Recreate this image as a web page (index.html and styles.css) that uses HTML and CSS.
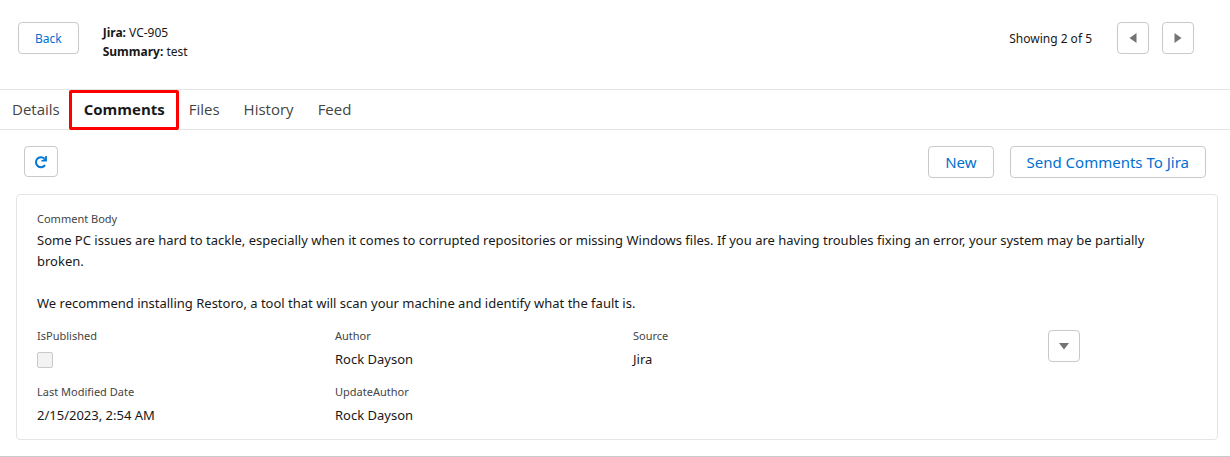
FILE: index.html
```html
<!DOCTYPE html>
<html lang="en">
<head>
    <meta charset="UTF-8">
    <meta name="viewport" content="width=device-width, initial-scale=1.0">
    <title>Jira VC-905</title>
    <link rel="stylesheet" href="styles.css">
</head>
<body>
    <div class="page">
        <header class="header">
            <button class="btn btn-small" type="button">Back</button>
            <div class="issue">
                <p><strong>Jira:</strong> VC-905</p>
                <p><strong>Summary:</strong> test</p>
            </div>
            <div class="pager">
                <span class="pager-text">Showing 2 of 5</span>
                <button class="btn btn-icon" type="button" aria-label="Previous">
                    <svg width="8" height="12" viewBox="0 0 8 12"><path d="M7.5 1v10L0.5 6z"/></svg>
                </button>
                <button class="btn btn-icon" type="button" aria-label="Next">
                    <svg width="8" height="12" viewBox="0 0 8 12"><path d="M0.5 1v10l7-5z"/></svg>
                </button>
            </div>
        </header>

        <nav class="tabs">
            <a class="tab" href="#details">Details</a>
            <a class="tab active" href="#comments">Comments</a>
            <a class="tab" href="#files">Files</a>
            <a class="tab" href="#history">History</a>
            <a class="tab" href="#feed">Feed</a>
        </nav>

        <div class="toolbar">
            <button class="btn btn-refresh" type="button" aria-label="Refresh">
                <svg width="14" height="14" viewBox="0 0 14 14">
                    <path class="arc" d="M11 10.2A5 5 0 1 1 10.4 3.6"/>
                    <path class="arrow" d="M12.9 1v5.6H7.3V5.2l2-.4 1.9-2V1z"/>
                </svg>
            </button>
            <div class="actions">
                <button class="btn" type="button">New</button>
                <button class="btn" type="button">Send Comments To Jira</button>
            </div>
        </div>

        <section class="card">
            <div class="label">Comment Body</div>
            <div class="body">
                <p>Some PC issues are hard to tackle, especially when it comes to corrupted repositories or missing Windows files. If you are having troubles fixing an error, your system may be partially broken.</p>
                <p>We recommend installing Restoro, a tool that will scan your machine and identify what the fault is.</p>
            </div>
            <div class="fields">
                <div class="field">
                    <label class="label" for="published">IsPublished</label>
                    <input class="checkbox" type="checkbox" id="published" disabled>
                </div>
                <div class="field">
                    <div class="label">Author</div>
                    <div class="value">Rock Dayson</div>
                </div>
                <div class="field">
                    <div class="label">Source</div>
                    <div class="value">Jira</div>
                </div>
                <div class="menu">
                    <button class="btn btn-icon" type="button" aria-label="Show menu">
                        <svg width="12" height="8" viewBox="0 0 12 8"><path d="M1 1h10L6 7.5z"/></svg>
                    </button>
                </div>
                <div class="field">
                    <div class="label">Last Modified Date</div>
                    <div class="value">2/15/2023, 2:54 AM</div>
                </div>
                <div class="field">
                    <div class="label">UpdateAuthor</div>
                    <div class="value">Rock Dayson</div>
                </div>
            </div>
        </section>
    </div>
</body>
</html>
```
FILE: styles.css
```css
* {
    margin: 0;
    padding: 0;
    box-sizing: border-box;
}

body {
    font-family: "Segoe UI", "Noto Sans", sans-serif;
    font-size: 13px;
    line-height: 19px;
    color: #181818;
    background-color: #ffffff;
}

.page {
    padding-bottom: 16px;
    border-bottom: 1px solid #c9c9c9;
}

.header {
    display: flex;
    align-items: flex-start;
    padding: 22px 36px 28px 18px;
    border-bottom: 1px solid #e5e5e5;
}

.issue {
    margin-left: 24px;
    padding-top: 1px;
    font-size: 12px;
}

.pager {
    display: flex;
    align-items: center;
    gap: 13px;
    margin-left: auto;
}

.pager-text {
    margin-right: 12px;
    font-size: 12px;
}

.btn {
    display: flex;
    align-items: center;
    justify-content: center;
    height: 32px;
    padding: 0 16px;
    font-family: inherit;
    font-size: 15px;
    color: #0070d2;
    background-color: #ffffff;
    border: 1px solid #c9c9c9;
    border-radius: 4px;
    cursor: pointer;
}

.btn:hover {
    background-color: #f3f3f3;
}

.btn-small {
    font-size: 12px;
}

.btn-icon {
    width: 32px;
    padding: 0;
    fill: #747474;
}

.btn-refresh {
    width: 34px;
    height: 31px;
    padding: 0;
}

.arc {
    fill: none;
    stroke: #0176d3;
    stroke-width: 2;
}

.arrow {
    fill: #0176d3;
}

.tabs {
    display: flex;
    border-bottom: 1px solid #e5e5e5;
}

.tab {
    position: relative;
    padding: 0 12px;
    font-family: "Segoe UI", "Open Sans", sans-serif;
    font-size: 15px;
    line-height: 39px;
    color: #444444;
    text-decoration: none;
}

.active {
    font-weight: bold;
    color: #181818;
}

.active::after {
    content: "";
    position: absolute;
    inset: 0 -2px -1px -3px;
    border: 3px solid #ff0000;
    border-radius: 2px;
}

.toolbar {
    display: flex;
    justify-content: space-between;
    padding: 16px 24px;
}

.actions {
    display: flex;
    gap: 16px;
}

.card {
    margin: 0 12px 0 16px;
    padding: 14px 20px 9px;
    border: 1px solid #e5e5e5;
    border-radius: 4px;
}

.label {
    display: block;
    font-size: 11px;
    line-height: 20px;
    color: #444444;
}

.body {
    padding: 1px 20px 0 0;
    line-height: 21px;
}

.body p + p {
    margin-top: 21px;
}

.fields {
    display: grid;
    grid-template-columns: repeat(4, 1fr);
    gap: 8px 12px;
    margin: 12px -20px 0 0;
}

.field {
    min-height: 48px;
}

.value {
    padding-top: 3px;
    line-height: 21px;
}

.checkbox {
    appearance: none;
    display: block;
    width: 16px;
    height: 16px;
    margin-top: 6px;
    background-color: #f3f3f3;
    border: 1px solid #c9c9c9;
    border-radius: 2px;
}

.menu {
    display: flex;
    justify-content: center;
    padding: 4px 20px 0 0;
}
```
